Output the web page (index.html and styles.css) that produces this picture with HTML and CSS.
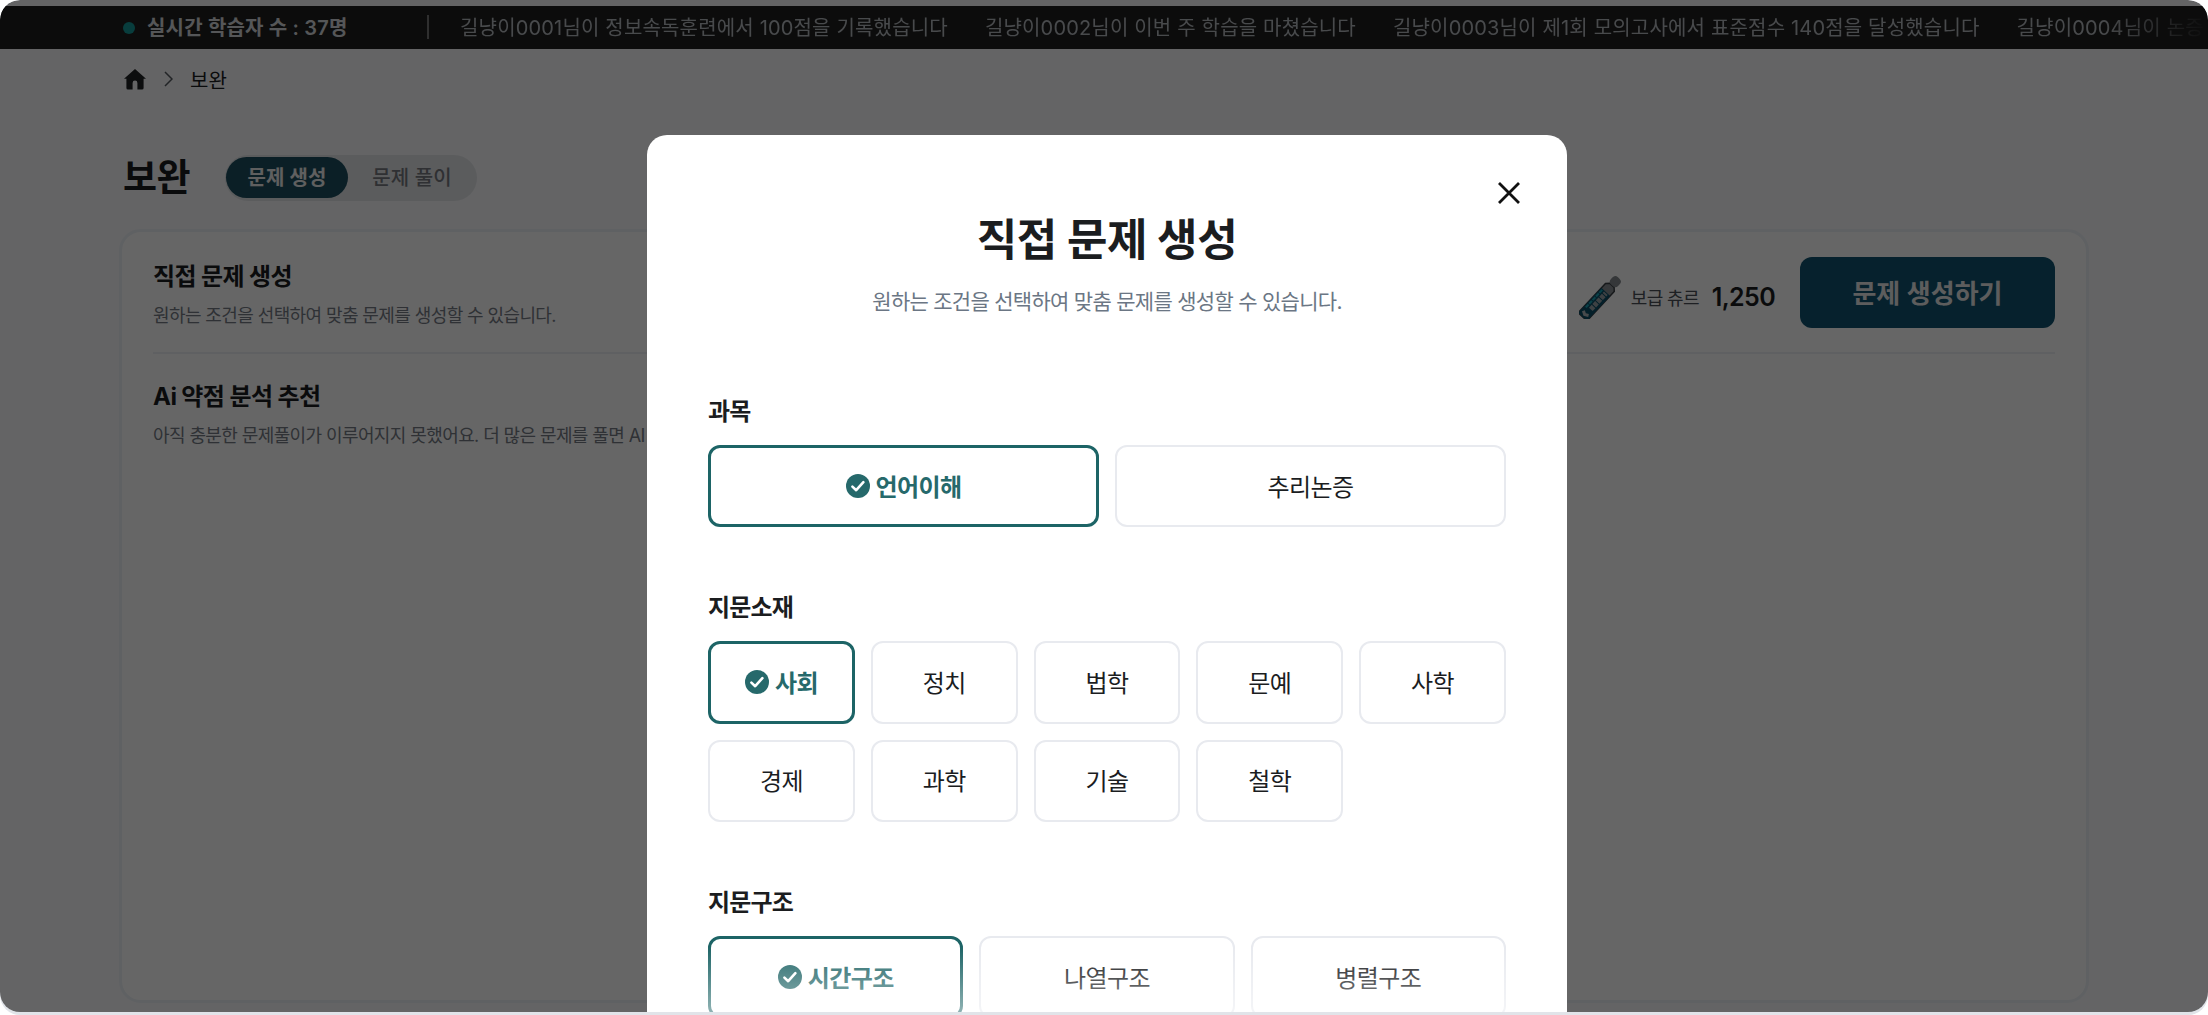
FILE: index.html
```html
<!DOCTYPE html>
<html lang="ko">
<head>
    <meta charset="UTF-8">
    <meta name="viewport" content="width=device-width, initial-scale=1.0">
    <title>보완 - 직접 문제 생성</title>
    <link rel="stylesheet" href="styles.css">
</head>
<body>
    <svg width="0" height="0" class="sprite">
        <symbol id="check" viewBox="0 0 24 24">
            <circle cx="12" cy="12" r="12" fill="#26696b"/>
            <path d="M6.4 12.6l3.8 3.6 7.2-8" fill="none" stroke="#fff" stroke-width="2.6" stroke-linecap="round" stroke-linejoin="round"/>
        </symbol>
    </svg>

    <div class="frame">
        <div class="page">
            <div class="ticker">
                <span class="dot"></span>
                <strong class="live">실시간 학습자 수 : 37명</strong>
                <span class="bar"></span>
                <div class="news">
                    <span>길냥이0001님이 정보속독훈련에서 100점을 기록했습니다</span>
                    <span>길냥이0002님이 이번 주 학습을 마쳤습니다</span>
                    <span>길냥이0003님이 제1회 모의고사에서 표준점수 140점을 달성했습니다</span>
                    <span>길냥이0004님이 논증</span>
                </div>
            </div>

            <nav class="breadcrumb">
                <svg class="home" viewBox="0 0 22 21"><path d="M11 0L0 9.8h2.4V19a1.6 1.6 0 0 0 1.6 1.6h4.6V14a2.4 2.4 0 0 1 4.8 0v6.6H18a1.6 1.6 0 0 0 1.6-1.6V9.8H22z" fill="#202224"/></svg>
                <svg class="arrow" viewBox="0 0 9 16"><path d="M1 1l7 7-7 7" fill="none" stroke="#555a60" stroke-width="1.5"/></svg>
                <span>보완</span>
            </nav>

            <div class="heading">
                <h1>보완</h1>
                <div class="tabs">
                    <span class="tab active">문제 생성</span>
                    <span class="tab">문제 풀이</span>
                </div>
            </div>

            <main class="card">
                <section class="row">
                    <div class="row-text">
                        <h2>직접 문제 생성</h2>
                        <p>원하는 조건을 선택하여 맞춤 문제를 생성할 수 있습니다.</p>
                    </div>
                    <div class="row-side">
                        <svg class="churu" viewBox="0 0 44 44">
                            <g transform="rotate(-47 22 22)">
                                <path d="M-5 16h40l3 3v6l-3 3H-5z" fill="#8a8f93" stroke="#3a3f44" stroke-width="1.5"/>
                                <path d="M-5 16h34v12H-5z" fill="#0c4f68"/>
                                <path d="M4 18h24" stroke="#1ba3b5" stroke-width="2" stroke-dasharray="4 1"/>
                                <path d="M6 23h22" stroke="#9aa3a8" stroke-width="5" stroke-dasharray="4 1"/>
                                <path d="M0 18.500l-2 3.500 2 3.500" fill="none" stroke="#b5babd" stroke-width="3"/>
                                <rect x="38" y="17" width="10" height="10" rx="4" fill="#84898e"/>
                            </g>
                        </svg>
                        <span class="churu-name">보급 츄르</span>
                        <strong class="churu-count">1,250</strong>
                        <button class="create">문제 생성하기</button>
                    </div>
                </section>
                <section class="row ai">
                    <div class="row-text">
                        <h2>Ai 약점 분석 추천</h2>
                        <p>아직 충분한 문제풀이가 이루어지지 못했어요. 더 많은 문제를 풀면 AI</p>
                    </div>
                </section>
            </main>
        </div>

        <div class="overlay">
            <div class="modal">
                <button class="close" aria-label="닫기">
                    <svg viewBox="0 0 22 22"><path d="M1 1l20 20M21 1L1 21" stroke="#111" stroke-width="2.8"/></svg>
                </button>
                <h2 class="modal-title">직접 문제 생성</h2>
                <p class="modal-desc">원하는 조건을 선택하여 맞춤 문제를 생성할 수 있습니다.</p>

                <h3>과목</h3>
                <div class="options two">
                    <button class="option selected"><svg><use href="#check"/></svg>언어이해</button>
                    <button class="option">추리논증</button>
                </div>

                <h3>지문소재</h3>
                <div class="options five">
                    <button class="option selected"><svg><use href="#check"/></svg>사회</button>
                    <button class="option">정치</button>
                    <button class="option">법학</button>
                    <button class="option">문예</button>
                    <button class="option">사학</button>
                    <button class="option">경제</button>
                    <button class="option">과학</button>
                    <button class="option">기술</button>
                    <button class="option">철학</button>
                </div>

                <h3>지문구조</h3>
                <div class="options three">
                    <button class="option selected"><svg><use href="#check"/></svg>시간구조</button>
                    <button class="option">나열구조</button>
                    <button class="option">병렬구조</button>
                </div>
                <div class="fade"></div>
            </div>
        </div>
    </div>
</body>
</html>
```

FILE: styles.css
```css
* {
    box-sizing: border-box;
}

body {
    margin: 0;
    background-color: #fff;
    color: #1b1d1f;
    font-family: 'Inter', 'Noto Sans CJK KR', sans-serif;
    letter-spacing: -0.64px;
    overflow: hidden;
}

h1, h2, h3, p {
    margin: 0;
}

button {
    font-family: inherit;
    letter-spacing: inherit;
    color: inherit;
    padding: 0;
}

.sprite {
    position: absolute;
}

.frame {
    position: relative;
    height: 1015px;
    padding-bottom: 3px;
    border-radius: 20px;
    background-color: #e1e4e9;
    overflow: hidden;
}

.page {
    height: 1012px;
    padding-top: 6px;
    border-radius: 20px;
    background-color: #f9fafd;
    overflow: hidden;
}

.ticker {
    display: flex;
    align-items: center;
    height: 43px;
    padding: 0 0 2px 123px;
    background-color: #202020;
    font-size: 20px;
    letter-spacing: 0.17px;
    white-space: nowrap;
}

.dot {
    width: 12px;
    height: 12px;
    margin-top: 3px;
    border-radius: 50%;
    background-color: #159a98;
}

.live {
    width: 280px;
    padding-left: 12px;
    color: #d5d8dc;
    font-weight: 600;
}

.bar {
    width: 2px;
    height: 24px;
    margin-left: 12px;
    background-color: #777;
}

.news {
    display: flex;
    flex: 1;
    gap: 37px;
    margin-left: 31px;
    color: #b5b9be;
    overflow: hidden;
    mask-image: linear-gradient(to right, #000 94%, transparent 100%);
}

.breadcrumb {
    display: flex;
    align-items: center;
    height: 60px;
    padding-left: 124px;
    font-size: 20px;
    letter-spacing: 0;
}

.home {
    width: 22px;
    height: 21px;
}

.arrow {
    width: 9px;
    height: 16px;
    margin: 0 17px 0 18px;
}

.heading {
    display: flex;
    align-items: center;
    height: 46px;
    margin-top: 46px;
    padding-left: 123px;
}

.heading h1 {
    width: 102px;
    font-size: 37px;
    line-height: 46px;
}

.tabs {
    display: flex;
    width: 252px;
    height: 46px;
    padding: 2px 1px;
    border-radius: 23px;
    background-color: #e4e6e9;
    letter-spacing: 0.1px;
}

.tab {
    width: 122px;
    height: 41px;
    border-radius: 21px;
    color: #75797f;
    font-size: 20px;
    font-weight: 500;
    line-height: 43px;
    text-align: center;
}

.tab + .tab {
    width: 128px;
}

.tab.active {
    background-color: #1c4e5f;
    color: #eee;
    font-weight: 700;
}

.card {
    height: 774px;
    margin: 28px 119px 0;
    padding: 25px 31px;
    border: 3px solid #eef2f7;
    border-radius: 22px;
    background-color: #fff;
}

.row {
    display: flex;
    justify-content: space-between;
    height: 97px;
    border-bottom: 2px solid #eef1f5;
}

.row.ai {
    height: 120px;
    padding-top: 23px;
    border: none;
}

.row h2 {
    font-size: 24px;
    letter-spacing: -0.6px;
    line-height: 40px;
}

.row p {
    color: #757b85;
    font-size: 18px;
    letter-spacing: -0.6px;
    line-height: 38px;
    white-space: nowrap;
}

.row-side {
    display: flex;
    align-items: center;
    height: 71px;
}

.churu {
    width: 44px;
    height: 44px;
    margin-top: 8px;
}

.churu-name {
    margin: 8px 0 0 8px;
    color: #4c5158;
    font-size: 18px;
}

.churu-count {
    margin: 8px 25px 0 13px;
    font-size: 25px;
    font-weight: 600;
}

.create {
    width: 255px;
    height: 71px;
    padding-bottom: 3px;
    border: none;
    border-radius: 12px;
    background-color: #0f5370;
    color: #e8e8e8;
    font-size: 26px;
    font-weight: 600;
    letter-spacing: 0;
}

.overlay {
    position: absolute;
    inset: 0 0 3px;
    display: flex;
    justify-content: center;
    padding: 135px 0 0 6px;
    border-radius: 20px;
    background-color: rgba(0, 0, 0, 0.6);
    overflow: hidden;
}

.modal {
    position: relative;
    width: 920px;
    height: 1100px;
    padding: 75px 61px 0;
    border-radius: 20px;
    background-color: #fff;
}

.close {
    position: absolute;
    top: 47px;
    right: 47px;
    width: 22px;
    height: 22px;
    border: none;
    background: none;
}

.close svg {
    display: block;
}

.modal-title {
    font-size: 44px;
    letter-spacing: -0.4px;
    line-height: 61px;
    text-align: center;
}

.modal-desc {
    margin-bottom: 63px;
    color: #6b7684;
    font-size: 21px;
    letter-spacing: -0.72px;
    line-height: 61px;
    text-align: center;
}

.modal h3 {
    font-size: 24px;
    letter-spacing: -0.8px;
    line-height: 34px;
}

.options {
    display: grid;
    gap: 16px;
    margin: 16px 0 64px;
}

.two {
    grid-template-columns: repeat(2, 1fr);
}

.three {
    grid-template-columns: repeat(3, 1fr);
}

.five {
    grid-template-columns: repeat(5, 1fr);
}

.option {
    display: flex;
    align-items: center;
    justify-content: center;
    gap: 6px;
    height: 82.3px;
    padding-bottom: 2px;
    border: 2px solid #e8eaef;
    border-radius: 12px;
    background-color: #fff;
    font-size: 24px;
    font-weight: 400;
    letter-spacing: -0.6px;
}

.option svg {
    width: 24px;
    height: 24px;
    margin-top: 2px;
}

.option.selected {
    border: 3px solid #1d6466;
    color: #26696b;
    font-weight: 700;
}

.fade {
    position: absolute;
    left: 0;
    right: 0;
    top: 811px;
    height: 66px;
    background: linear-gradient(rgba(255, 255, 255, 0), rgba(255, 255, 255, 0.5));
}
```
